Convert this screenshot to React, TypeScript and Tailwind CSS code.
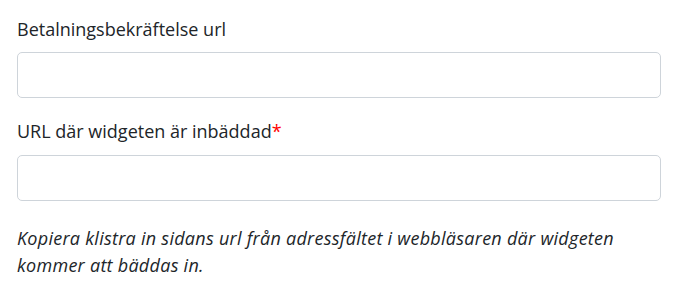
export default function App() {
  return (
    <div className="bg-white pl-[17px] pr-[18px] pt-4 font-['Open_Sans',sans-serif] text-[18px] leading-[27px] text-[#212529]">
      <div className="mb-5">
        <label className="mb-[9px] block">Betalningsbekräftelse url</label>
        <input
          type="text"
          className="block h-[46px] w-full rounded-[5px] border border-[#ced4da] bg-white px-3 outline-none"
        />
      </div>
      <div>
        <label className="mb-[10px] block">
          URL där widgeten är inbäddad<span className="text-[#f00]">*</span>
        </label>
        <input
          type="text"
          className="block h-[46px] w-full rounded-[5px] border border-[#ced4da] bg-white px-3 outline-none"
        />
      </div>
      <p className="mt-6 italic tracking-[0.27px]">
        Kopiera klistra in sidans url från adressfältet i webbläsaren där widgeten kommer att bäddas in.
      </p>
    </div>
  );
}
